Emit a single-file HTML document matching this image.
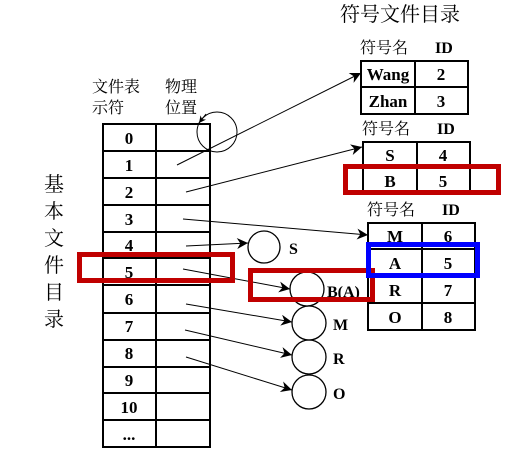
<!DOCTYPE html>
<html><head><meta charset="utf-8"><style>
html,body{margin:0;padding:0;background:#fff;}
svg text{font-family:"Liberation Serif","Noto Serif CJK SC",serif;fill:#000;}
.b{font-weight:bold;}
</style></head><body>
<svg width="515" height="454" viewBox="0 0 515 454" xmlns="http://www.w3.org/2000/svg">
<defs>
<marker id="ah" viewBox="0 0 10 10" refX="10" refY="5" markerWidth="7" markerHeight="7" orient="auto" markerUnits="userSpaceOnUse">
<path d="M0,0 L10,5 L0,10 L3,5 z" fill="#000"/></marker>
<marker id="ah2" viewBox="0 0 10 10" refX="10" refY="5" markerWidth="13" markerHeight="11" orient="auto" markerUnits="userSpaceOnUse">
<path d="M0,0 L10,5 L0,10 L3,5 z" fill="#000"/></marker>
</defs>
<text x="340" y="21" font-size="20">符号文件目录</text>
<text x="92" y="92" font-size="16">文件表</text>
<text x="92" y="113" font-size="16">示符</text>
<text x="165" y="92" font-size="16">物理</text>
<text x="165" y="113" font-size="16">位置</text>
<g font-size="20" fill="#222">
<text x="44" y="191">基</text><text x="44" y="218">本</text><text x="44" y="245">文</text>
<text x="44" y="272">件</text><text x="44" y="299">目</text><text x="44" y="326">录</text>
</g>
<g stroke="#000" stroke-width="2" fill="none">
<rect x="103" y="124" width="107" height="323"/>
<line x1="156" y1="124" x2="156" y2="447"/>
<line x1="103" y1="151" x2="210" y2="151"/><line x1="103" y1="178" x2="210" y2="178"/>
<line x1="103" y1="205" x2="210" y2="205"/><line x1="103" y1="232" x2="210" y2="232"/>
<line x1="103" y1="258" x2="210" y2="258"/><line x1="103" y1="285" x2="210" y2="285"/>
<line x1="103" y1="313" x2="210" y2="313"/><line x1="103" y1="340" x2="210" y2="340"/>
<line x1="103" y1="367" x2="210" y2="367"/><line x1="103" y1="393" x2="210" y2="393"/>
<line x1="103" y1="420" x2="210" y2="420"/>
</g>
<g font-size="17" text-anchor="middle" class="b">
<text x="129" y="144">0</text><text x="129" y="171">1</text><text x="129" y="198">2</text>
<text x="129" y="225">3</text><text x="129" y="251">4</text><text x="129" y="278">5</text>
<text x="129" y="305">6</text><text x="129" y="332">7</text><text x="129" y="359">8</text>
<text x="129" y="386">9</text><text x="129" y="413">10</text><text x="129" y="440">...</text>
</g>
<circle cx="217" cy="132" r="20" fill="none" stroke="#000" stroke-width="1"/>
<line x1="206" y1="114" x2="199" y2="123" stroke="#000" marker-end="url(#ah)"/>
<g font-size="16">
<text x="360" y="53">符号名</text><text x="435" y="53" class="b">ID</text>
<text x="362" y="134">符号名</text><text x="437" y="134" class="b">ID</text>
<text x="367" y="215">符号名</text><text x="442" y="215" class="b">ID</text>
</g>
<g stroke="#000" stroke-width="2" fill="none">
<rect x="361" y="61" width="107" height="53"/><line x1="415" y1="61" x2="415" y2="114"/><line x1="361" y1="87" x2="468" y2="87"/>
<rect x="363" y="142" width="107" height="51"/><line x1="417" y1="142" x2="417" y2="193"/><line x1="363" y1="168" x2="470" y2="168"/>
<rect x="368" y="223" width="107" height="107"/><line x1="422" y1="223" x2="422" y2="330"/>
<line x1="368" y1="249" x2="475" y2="249"/><line x1="368" y1="276" x2="475" y2="276"/><line x1="368" y1="303" x2="475" y2="303"/>
</g>
<g font-size="17" text-anchor="middle" class="b">
<text x="388" y="80">Wang</text><text x="441" y="80">2</text>
<text x="388" y="107">Zhan</text><text x="441" y="107">3</text>
<text x="390" y="161">S</text><text x="443" y="161">4</text>
<text x="390" y="187">B</text><text x="443" y="187">5</text>
<text x="395" y="242">M</text><text x="448" y="242">6</text>
<text x="395" y="269">A</text><text x="448" y="269">5</text>
<text x="395" y="296">R</text><text x="448" y="296">7</text>
<text x="395" y="323">O</text><text x="448" y="323">8</text>
</g>
<g fill="none" stroke="#000" stroke-width="1.3">
<circle cx="264" cy="247" r="16"/><circle cx="307" cy="289" r="17"/>
<circle cx="309" cy="323" r="17"/><circle cx="309" cy="357" r="17"/><circle cx="309" cy="392" r="17"/>
</g>
<g font-size="16" class="b">
<text x="289" y="254">S</text><text x="327" y="297">B(A)</text>
<text x="333" y="330">M</text><text x="333" y="364">R</text><text x="333" y="399">O</text>
</g>
<g stroke="#000" stroke-width="1" marker-end="url(#ah2)">
<line x1="177" y1="165" x2="361" y2="73"/>
<line x1="186" y1="192" x2="362" y2="147"/>
<line x1="183" y1="219" x2="368" y2="235"/>
<line x1="186" y1="246" x2="248" y2="243"/>
<line x1="183" y1="269" x2="290" y2="289"/>
<line x1="186" y1="304" x2="292" y2="322"/>
<line x1="185" y1="330" x2="292" y2="355"/>
<line x1="186" y1="357" x2="292" y2="390"/>
</g>
<g fill="none" stroke-width="5">
<rect x="345.5" y="166.5" width="153" height="26" stroke="#c00000"/>
<rect x="79.5" y="254.5" width="153" height="26" stroke="#c00000"/>
<rect x="250.5" y="270.5" width="122" height="29" stroke="#c00000"/>
<rect x="368.5" y="244.5" width="109" height="31" stroke="#0000ff"/>
</g>
</svg>
</body></html>
